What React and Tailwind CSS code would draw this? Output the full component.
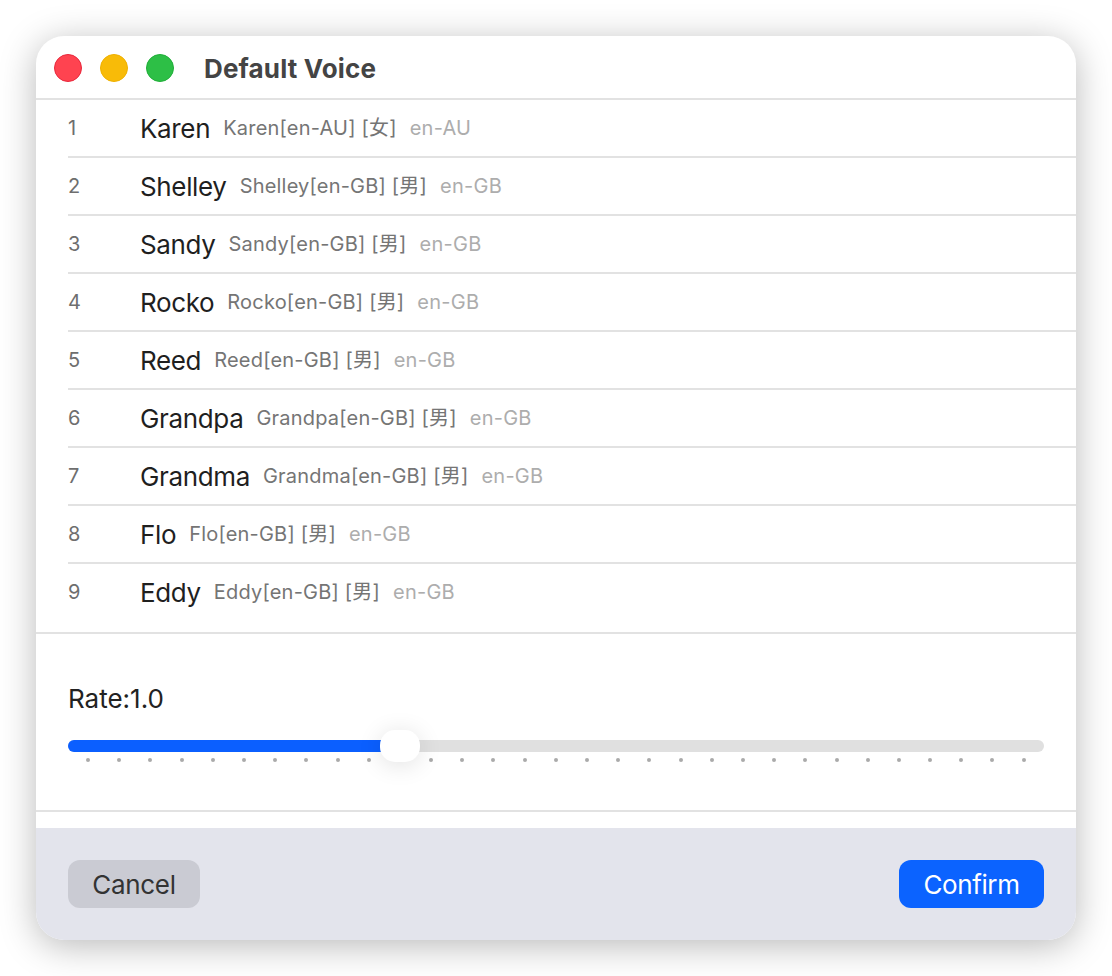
import React from "react";

const voices = [
  { name: "Karen", lang: "en-AU", gender: "女" },
  { name: "Shelley", lang: "en-GB", gender: "男" },
  { name: "Sandy", lang: "en-GB", gender: "男" },
  { name: "Rocko", lang: "en-GB", gender: "男" },
  { name: "Reed", lang: "en-GB", gender: "男" },
  { name: "Grandpa", lang: "en-GB", gender: "男" },
  { name: "Grandma", lang: "en-GB", gender: "男" },
  { name: "Flo", lang: "en-GB", gender: "男" },
  { name: "Eddy", lang: "en-GB", gender: "男" },
];

const ticks = Array.from({ length: 31 }, (_, i) => i);

const VoiceRow = ({ index, voice, last }) => (
  <div className={`flex items-center ${last ? "h-[56px]" : "h-[58px] border-b-2 border-[#e2e2e2]"}`}>
    <span className="w-[72px] text-[20px] text-[#6e6e6e]">{index}</span>
    <span className="text-[26px] tracking-[-0.35px] text-[#1f1f1f]">{voice.name}</span>
    <span className="ml-[13px] text-[20px] tracking-[0.2px] text-[#757575]">
      {voice.name}[{voice.lang}] [{voice.gender}]
    </span>
    <span className="ml-[13px] text-[20px] tracking-[0.25px] text-[#adadad]">{voice.lang}</span>
  </div>
);

export default function App() {
  return (
    <div className="h-[976px] w-[1112px] overflow-hidden bg-white p-[36px] font-['Inter','Noto_Sans_CJK_SC',sans-serif]">
      <div className="flex h-[904px] w-[1040px] flex-col overflow-hidden rounded-[28px] bg-white shadow-[0_6px_36px_rgba(0,0,0,0.28)]">
        <div className="flex h-[64px] shrink-0 items-center border-b-2 border-[#e2e2e2] pt-[2px] pl-[18px]">
          <div className="flex gap-[18px]">
            <span className="h-[28px] w-[28px] rounded-full border border-[#e8283c] bg-[#ff4350]" />
            <span className="h-[28px] w-[28px] rounded-full border border-[#eeb000] bg-[#f8bb08]" />
            <span className="h-[28px] w-[28px] rounded-full border border-[#1fae38] bg-[#2dbf46]" />
          </div>
          <h1 className="ml-[30px] text-[26px] font-bold tracking-[0.15px] text-[#444444]">Default Voice</h1>
        </div>

        <div className="h-[534px] shrink-0 border-b-2 border-[#e2e2e2] pl-[32px]">
          {voices.map((voice, i) => (
            <VoiceRow key={voice.name} index={i + 1} voice={voice} last={i === voices.length - 1} />
          ))}
        </div>

        <div className="h-[178px] shrink-0 border-b-2 border-[#e2e2e2] px-[32px] pt-[48px]">
          <div className="text-[26px] leading-[34px] text-[#222222]">Rate:1.0</div>
          <div className="relative mt-[24px] h-[12px] rounded-full bg-[#e0e0e0]">
            <div className="h-full w-[332px] rounded-l-full bg-[#0b5fff]" />
            <div className="absolute left-[312px] top-[-10px] h-[32px] w-[40px] rounded-[15px] bg-white shadow-[0_3px_24px_rgba(0,0,0,0.12)]" />
          </div>
          <div className="mt-[6px] flex justify-between px-[18px]">
            {ticks.map((t) =>
              t === 10 ? (
                <span key={t} className="h-[4px] w-[4px]" />
              ) : (
                <span key={t} className="h-[4px] w-[4px] rounded-full bg-[#aaaaaa]" />
              )
            )}
          </div>
        </div>

        <div className="h-[16px] shrink-0" />

        <div className="flex flex-1 items-center justify-between bg-[#e3e4ec] px-[32px]">
          <button className="h-[48px] w-[132px] rounded-[12px] bg-[#cacbd3] text-[26px] tracking-[-0.3px] text-[#333333]">Cancel</button>
          <button className="h-[48px] w-[145px] rounded-[12px] bg-[#0b63ff] text-[26px] tracking-[-0.4px] text-white">Confirm</button>
        </div>
      </div>
    </div>
  );
}
